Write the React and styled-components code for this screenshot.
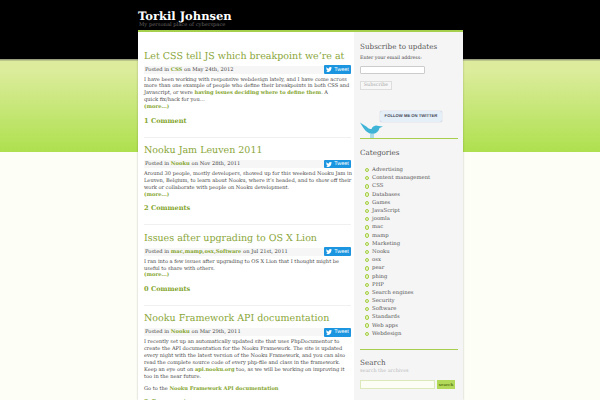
import React from 'react';
import styled, { createGlobalStyle } from 'styled-components';

const Global = createGlobalStyle`
  html, body { margin: 0; padding: 0; height: 400px; overflow: hidden; }
  body {
    font-family: "DejaVu Serif", serif;
    text-rendering: geometricPrecision;
    background: linear-gradient(#000 0 59px, #9a9f80 59px, #9a9f80 60px, #dcec9c 61px, #dcec9c 70px, #aee04e 152px, #fdfef6 152px, #fdfef6 100%);
  }
  a { text-decoration: none; }
`;
const Page = styled.div`
  width: 600px; height: 400px; overflow: hidden;
`;
const Header = styled.header`
  padding: 10px 0 0 138px; height: 20px; color: #fff;
`;
const SiteTitle = styled.h1`
  margin: 0; font-size: 11.5px; line-height: 13px; font-weight: 700; color: #fff;
`;
const Tagline = styled.div`
  font-size: 5.2px; line-height: 5px; color: #666; margin: 0 0 0 1px;
`;
const Wrap = styled.div`
  width: 325px; margin-left: 138px; display: flex; border-top: 2px solid #a6cf4d;
  box-shadow: 0 0 2px rgba(0,0,0,.25); background: #f5f5f6;
`;
const Main = styled.main`
  width: 216px; flex: none; background: #fff; padding: 18.5px 3px 0 6px; box-sizing: border-box;
  height: 368px; overflow: hidden;
`;
const Post = styled.article`
  border-bottom: 1px solid #f0f0f0; padding-bottom: 12px; margin-bottom: 7.5px;
`;
const PostTitle = styled.h2`
  margin: 0 0 3px; font-size: 9.5px; line-height: 12px; font-weight: 400; color: #8aa63a;
  white-space: nowrap;
`;
const Meta = styled.div`
  display: flex; justify-content: space-between; align-items: center; background: #f6f6f6;
  height: 8px; padding-left: 1px; font-size: 5.2px; color: #444; margin-bottom: 3px;
  b { font-weight: 700; color: #84a52e; }
`;
const Tweet = styled.span`
  display: inline-flex; align-items: center; justify-content: center; gap: 2px;
  width: 27px; height: 8.5px; background: #1b95e0; border-radius: 1px; color: #fff; font-size: 5.4px;
  font-family: "Liberation Sans", sans-serif;
`;
const Body = styled.p`
  margin: 0 -1px 0 0; font-size: 5.08px; line-height: 6.9px; color: #4a4a4a;
  b { color: #84a52e; }
`;
const Gap = styled.div`height: 5px;`;
const More = styled.div`
  font-size: 5.2px; line-height: 6.9px; font-weight: 700; color: #84a52e;
`;
const Comments = styled.div`
  font-size: 6.6px; line-height: 8px; font-weight: 700; color: #84a52e; margin-top: 5.5px;
`;
const Side = styled.aside`
  flex: 1; padding: 10px 5px 0 6px; color: #555;
`;
const SideH = styled.h3`
  margin: 0; font-size: 7.2px; line-height: 9px; font-weight: 400; color: #555;
`;
const Label = styled.div`
  font-size: 4.7px; line-height: 7px; color: #444; margin-top: 4px;
`;
const Input = styled.div`
  width: 63px; height: 6px; background: #fff; border: 1px solid #ccc; border-radius: 1px; margin-top: 4px;
`;
const SubBtn = styled.div`
  width: 30px; height: 7px; border: 1px solid #ddd; background: #f7f7f7; color: #aaa; font-size: 4.8px; line-height: 7px;
  text-align: center; margin-top: 7px;
`;
const BirdRow = styled.div`
  position: relative; height: 48px; border-bottom: 1px solid #a6cf4d;
`;
const Bubble = styled.div`
  position: absolute; left: 20px; top: 21px; width: 62px; height: 10.5px; border-radius: 2px; background: #e4eff8;
  font: 700 4.2px/10.5px "Liberation Sans", sans-serif; color: #445; text-align: center; box-shadow: 0 0 1px #99b;
`;
const BirdIcon = styled.svg`
  position: absolute; left: 0; bottom: 0; width: 25px; height: 18px;
`;
const CatH = styled(SideH)`margin-top: 9px;`;
const Cats = styled.ul`
  list-style: none; margin: 9px 0 0; padding: 0 0 11px 4.5px; border-bottom: 1.5px solid #a6cf4d;
`;
const Cat = styled.li`
  display: flex; align-items: center; gap: 3.2px; height: 8.19px; font-size: 5.3px; color: #555; white-space: nowrap;
`;
const Dot = styled.span`
  width: 2.4px; height: 2.4px; border-radius: 50%; border: 1.2px solid #a4cf40; background: #e8f3c8; flex: none;
`;
const SearchH = styled(SideH)`margin-top: 8px;`;
const Hint = styled.div`font-size: 4.9px; line-height: 6px; color: #bbb; margin-top: 1px;`;
const SearchRow = styled.div`display: flex; gap: 2px; margin-top: 6px;`;
const SearchBox = styled.div`width: 73px; height: 7px; background: #fcfdf5; border: 1px solid #dce9bb;`;
const SearchBtn = styled.div`
  width: 18px; height: 9px; background: #b3d95a; font-size: 3.9px; line-height: 9px; font-weight: 700; color: #5b7a17; text-align: center;
`;

const Bird = () => (
  <svg width="6" height="5" viewBox="0 0 24 20"><path fill="#fff" d="M24 2.4c-.9.4-1.8.7-2.8.8 1-.6 1.800-1.600 2.200-2.700-1 .6-2 1-3.100 1.200A4.900 4.900 0 0 0 11.900 6.200C7.800 6 4.200 4 1.700.9.400 3.200 1 6.100 3.200 7.500c-.8 0-1.600-.2-2.200-.6 0 2.400 1.700 4.400 3.900 4.900-.7.200-1.500.2-2.200.1.600 2 2.400 3.400 4.600 3.400A9.900 9.900 0 0 1 0 17.800 14 14 0 0 0 21.500 5.400c1-.7 1.800-1.600 2.500-3z"/></svg>
);

const posts = [
  { t: 'Let CSS tell JS which breakpoint we’re at', cat: 'CSS', date: 'May 24th, 2012', c: '1 Comment', more: true,
    body: <>I have been working with responsive webdesign lately, and I have come across more than one example of people who define their breakpoints in both CSS and Javascript, or were <b>having issues deciding where to define them</b>. A<br />quick fix/hack for you…</> },
  { t: 'Nooku Jam Leuven 2011', cat: 'Nooku', date: 'Nov 28th, 2011', c: '2 Comments', more: true,
    body: <>Around 30 people, mostly developers, showed up for this weekend Nooku Jam in Leuven, Belgium, to learn about Nooku, where it’s headed, and to show off their work or collaborate with people on Nooku development.</> },
  { t: 'Issues after upgrading to OS X Lion', cat: 'mac,mamp,osx,Software', date: 'Jul 21st, 2011', c: '0 Comments', more: true,
    body: <>I ran into a few issues after upgrading to OS X Lion that I thought might be useful to share with others.</> },
  { t: 'Nooku Framework API documentation', cat: 'Nooku', date: 'Mar 29th, 2011', c: '3 Comments',
    body: <>I recently set up an automatically updated site that uses PhpDocumentor to create the API documentation for the Nooku Framework. The site is updated every night with the latest version of the Nooku Framework, and you can also read the complete source code of every php-file and class in the framework. Keep an eye out on <b>api.nooku.org</b> too, as we will be working on improving it too in the near future.</>,
    extra: <>Go to the <b>Nooku Framework API documentation</b></> },
];

const categories = ['Advertising','Content management','CSS','Databases','Games','JavaScript','joomla','mac','mamp','Marketing','Nooku','osx','pear','phing','PHP','Search engines','Security','Software','Standards','Web apps','Webdesign'];

export default function App() {
  return (
    <Page>
      <Global />
      <Header>
        <SiteTitle>Torkil Johnsen</SiteTitle>
        <Tagline>My personal place of cyberspace</Tagline>
      </Header>
      <Wrap>
        <Main>
          {posts.map((p) => (
            <Post key={p.t}>
              <PostTitle>{p.t}</PostTitle>
              <Meta>
                <span>Posted in <b>{p.cat}</b> on {p.date}</span>
                <Tweet><Bird />Tweet</Tweet>
              </Meta>
              <Body>{p.body}</Body>
              {p.more && <More>(more...)</More>}
              {p.extra && <><Gap /><Body>{p.extra}</Body></>}
              <Comments>{p.c}</Comments>
            </Post>
          ))}
        </Main>
        <Side>
          <SideH>Subscribe to updates</SideH>
          <Label>Enter your email address:</Label>
          <Input />
          <SubBtn>Subscribe</SubBtn>
          <BirdRow>
            <BirdIcon viewBox="0 0 25 18">
              <path fill="#3fb4d6" d="M0 2.500 7 7c1 1.500 2.500 2 4.500 2 1-3 4.500-4.500 7-3l4.500.5-3.500 1.500c-1 4.500-5 6.500-9.500 5.500C5.500 12 3 7.500 0 2.500z" />
              <path stroke="#3fb4d6" strokeWidth=".8" d="M11 14v4M13 14v4" />
            </BirdIcon>
            <Bubble>FOLLOW ME ON TWITTER</Bubble>
          </BirdRow>
          <CatH>Categories</CatH>
          <Cats>
            {categories.map((c) => <Cat key={c}><Dot />{c}</Cat>)}
          </Cats>
          <SearchH>Search</SearchH>
          <Hint>search the archives</Hint>
          <SearchRow><SearchBox /><SearchBtn>search</SearchBtn></SearchRow>
        </Side>
      </Wrap>
    </Page>
  );
}
